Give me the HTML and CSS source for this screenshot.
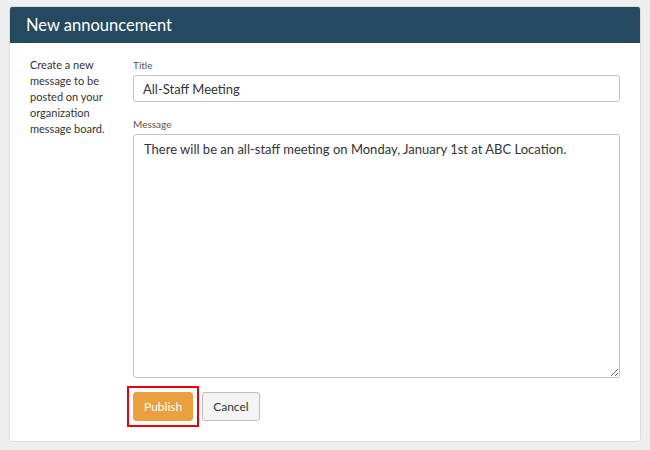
FILE: index.html
```html
<!DOCTYPE html>
<html lang="en">
<head>
    <meta charset="UTF-8">
    <title>New announcement</title>
    <link rel="stylesheet" href="styles.css">
</head>
<body>
    <div class="panel">
        <header class="panel-header">
            <h1>New announcement</h1>
        </header>
        <div class="panel-body">
            <p class="help">Create a new message to be posted on your organization message board.</p>
            <form class="announce-form">
                <label for="title">Title</label>
                <input type="text" id="title" value="All-Staff Meeting">

                <label for="message" class="spaced">Message</label>
                <textarea id="message">There will be an all-staff meeting on Monday, January 1st at ABC Location.</textarea>

                <div class="actions">
                    <span class="highlight">
                        <button type="button" class="btn btn-primary">Publish</button>
                    </span>
                    <button type="button" class="btn">Cancel</button>
                </div>
            </form>
        </div>
    </div>
</body>
</html>
```

FILE: styles.css
```css
body {
    margin: 0;
    padding: 6px 9px 9px 9px;
    background-color: #eeeeee;
    font-family: Lato, "Open Sans", sans-serif;
    color: #333;
}

.panel {
    background-color: #fff;
    border: 1px solid #dcdcdc;
    border-radius: 3px;
    overflow: hidden;
}

.panel-header {
    background-color: #25495f;
    height: 36px;
    display: flex;
    align-items: center;
    padding-left: 16px;
}

.panel-header h1 {
    margin: 0;
    font-size: 16.5px;
    font-weight: 400;
    color: #fff;
}

.panel-body {
    display: flex;
    padding: 14px 20px 20px 20px;
}

.help {
    width: 84px;
    margin: 0 19px 0 0;
    font-size: 11px;
    line-height: 16px;
    color: #333;
}

.announce-form {
    flex: 1;
    display: flex;
    flex-direction: column;
}

.announce-form label {
    font-size: 10px;
    line-height: 16px;
    color: #555;
    margin-bottom: 2px;
}

.announce-form label.spaced {
    margin-top: 14px;
}

.announce-form input,
.announce-form textarea {
    font-family: inherit;
    font-size: 13px;
    color: #333;
    border: 1px solid #c4c4c4;
    border-radius: 3px;
    box-sizing: border-box;
    width: 100%;
}

.announce-form input {
    height: 27px;
    padding: 0 9px;
}

.announce-form textarea {
    height: 244px;
    padding: 5px 10px;
    line-height: 18px;
}

.actions {
    display: flex;
    gap: 9px;
    margin-top: 14px;
}

.highlight {
    display: flex;
    border: 2px solid #e8000b;
    padding: 4px;
    margin: -6px;
}

.btn {
    height: 29px;
    padding: 0 10px;
    font-family: inherit;
    font-size: 12px;
    color: #333;
    background-color: #f4f4f4;
    border: 1px solid #bdbdbd;
    border-radius: 3px;
}

.btn-primary {
    color: #fff;
    background-color: #eaa03f;
    border-color: #eaa03f;
}
```
